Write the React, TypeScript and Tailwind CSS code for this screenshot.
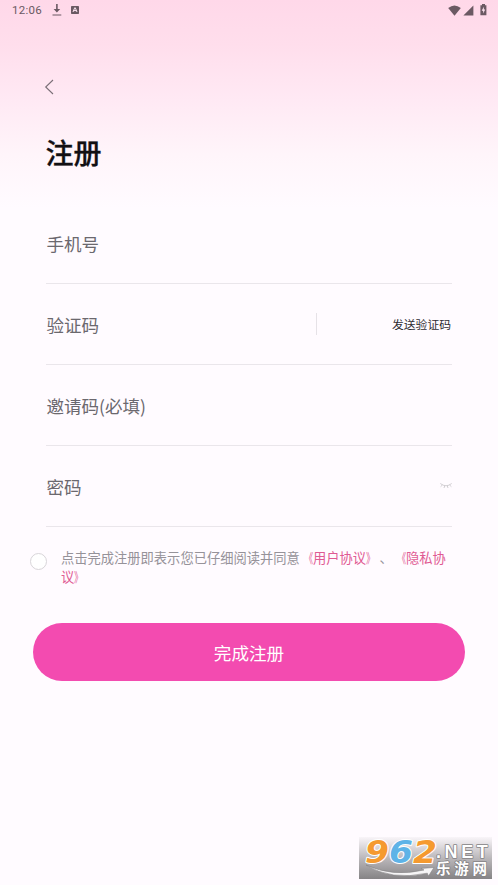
import type { ReactNode } from 'react';

function StatusBar() {
  return (
    <div className="flex h-5 items-center justify-between pl-3 pr-[11px] text-[#6b5963]">
      <div className="flex items-center">
        <span className="w-[30px] whitespace-nowrap font-[Roboto,sans-serif] text-[11.5px] leading-5 tracking-[0.3px]">12:06</span>
        <svg className="ml-[10px] h-3 w-[10px]" viewBox="0 0 10 12" fill="currentColor">
          <path d="M4.1 0h1.6v5h2.5L4.9 8.6 1.6 5h2.5zM.5 10.4h8.8v1.1H.5z" />
        </svg>
        <svg className="ml-[9px] h-2 w-2" viewBox="0 0 8 8">
          <rect width="8" height="8" rx=".7" fill="currentColor" />
          <path d="M2 6 3.7 1.8h.6L6 6M2.6 4.6h2.8" fill="none" stroke="#ffe5f2" strokeWidth="1" />
        </svg>
      </div>
      <div className="flex items-center">
        <svg className="h-[11px] w-[13px]" viewBox="0 0 13 11" fill="currentColor">
          <path d="M.2 3Q6.4-2 12.8 3L6.5 10.7z" />
        </svg>
        <svg className="ml-[2px] h-[11px] w-[11px]" viewBox="0 0 11 11" fill="currentColor">
          <path d="M.4 10.4 10.4.4v10z" />
        </svg>
        <svg className="ml-[6px] h-3 w-[7px]" viewBox="0 0 7 12">
          <path d="M2 0h3v1.2h1.4v10H.4v-10H2z" fill="currentColor" />
          <path d="M3.8 2.8 1.7 6.7h1.5v2.8l2-4.1H3.8z" fill="#ffe5f2" />
        </svg>
      </div>
    </div>
  );
}

function Field({ label, children }: { label: string; children?: ReactNode }) {
  return (
    <div className="flex h-[81px] items-center justify-between border-b border-[#eae6eb]">
      <span className="pl-[0.5px] pt-[2px] text-[17.55px] leading-6 text-[#6b686e]">{label}</span>
      {children}
    </div>
  );
}

function Agreement({ children }: { children: ReactNode }) {
  return <span className="text-[#df5a93]">{children}</span>;
}

function OpenMark() {
  return <span className="inline-block origin-right scale-x-[0.68]">《</span>;
}

function CloseMark() {
  return <span className="inline-block origin-left scale-x-[0.68]">》</span>;
}

function Watermark() {
  return (
    <svg
      className="absolute left-[359px] top-[837px] h-[42px] w-[133px] overflow-visible"
      viewBox="0 0 133 42"
      fontFamily="'Liberation Sans', 'Noto Sans CJK SC', sans-serif"
      fontWeight="700"
    >
      <defs>
        <linearGradient id="plate" x1="0" y1="0" x2="0" y2="1">
          <stop offset="0" stopColor="#f9f5f9" />
          <stop offset=".5" stopColor="#bbb8bb" />
          <stop offset="1" stopColor="#858385" />
        </linearGradient>
      </defs>
      <rect width="133" height="42" fill="url(#plate)" />
      <g
        fontFamily="'DejaVu Sans', sans-serif"
        fontSize="32"
        fontStyle="italic"
        stroke="#fff"
        strokeWidth="2"
        strokeLinejoin="round"
        paintOrder="stroke"
      >
        <text x="6" y="26" textLength="24" lengthAdjust="spacingAndGlyphs" fill="#f59a2f">9</text>
        <text x="30" y="26" textLength="24" lengthAdjust="spacingAndGlyphs" fill="#5eb3e7">6</text>
        <text x="54" y="26" textLength="24" lengthAdjust="spacingAndGlyphs" fill="#f59a2f">2</text>
      </g>
      <g fill="#fff" stroke="#858385" strokeWidth="1.6" strokeLinejoin="round" paintOrder="stroke">
        <text x="77" y="20.5" fontSize="18" letterSpacing="3.6">.NET</text>
        <text x="77" y="37" fontSize="14.5" textLength="51" fontFamily="'Noto Sans CJK SC', sans-serif">乐游网</text>
      </g>
      <path d="M7 28Q34 40.5 65 33l-3-1.6 13-.9-5.5 8.5-1.2-2.8Q32 44 7 28z" fill="#f6f5f6" stroke="#858385" strokeWidth=".6" />
    </svg>
  );
}

export default function App() {
  return (
    <main className="relative h-[885px] w-[498px] overflow-hidden bg-[#fffbff] bg-[linear-gradient(180deg,#ffd8e9_0px,#ffdeec_45px,#ffe9f4_100px,#fff5fa_155px,#fffbff_208px)] font-['Noto_Sans_CJK_SC',sans-serif] [text-spacing-trim:space-all]">
      <StatusBar />
      <header className="px-[46px] pt-[59px]">
        <button aria-label="返回" className="-ml-[2px] block">
          <svg className="h-4 w-[10px]" viewBox="0 0 10 16" fill="none" stroke="#7a6f77" strokeWidth="1.1">
            <path d="M9 1 1.7 8 9 15" />
          </svg>
        </button>
        <h1 className="-ml-[0.5px] mt-[37px] text-[28px] font-medium leading-10 text-[#121013] [-webkit-text-stroke:0.3px_#121013]">注册</h1>
      </header>

      <form className="mx-[46px] mt-[31px]">
        <Field label="手机号" />
        <Field label="验证码">
          <div className="flex w-[136px] items-center justify-between">
            <span className="h-[22px] w-px bg-[#e6e2e7]" />
            <span className="-translate-x-px text-[11.8px] leading-5 text-[#302d32]">发送验证码</span>
          </div>
        </Field>
        <Field label="邀请码(必填)" />
        <Field label="密码">
          <svg className="h-[6px] w-3" viewBox="0 0 12 6" fill="none" stroke="#ccc8cd" strokeWidth=".9">
            <path d="M.3.5Q6 5 11.7.5M2.4 2 .6 3.7M4.7 2.9 4 5M7.3 2.9 8 5M9.6 2l1.8 1.7" />
          </svg>
        </Field>
      </form>

      <div className="ml-[30px] mt-[21px] flex items-start">
        <span className="mt-[5px] h-[17px] w-[17px] shrink-0 rounded-full border border-[#d8d5d9] bg-white" />
        <p className="ml-[14px] w-[400px] text-[13.28px] leading-[19px] text-[#969299]">
          点击完成注册即表示您已仔细阅读并同意<Agreement><OpenMark />用户协议<CloseMark /></Agreement>、<Agreement><OpenMark />隐私协<br />议<CloseMark /></Agreement>
        </p>
      </div>

      <button className="ml-[33px] mt-[37px] flex h-[58px] w-[432px] items-center justify-center rounded-full bg-[#f34bb0] text-[17.6px] text-white">
        <span className="pt-[2px] leading-6">完成注册</span>
      </button>
      <Watermark />
    </main>
  );
}
